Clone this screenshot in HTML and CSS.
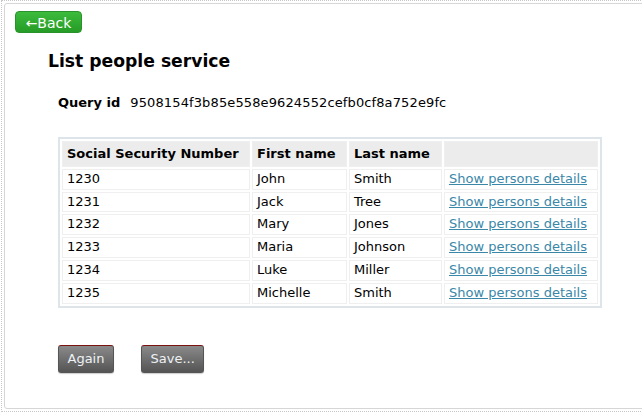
FILE: index.html
```html
<!DOCTYPE html>
<html>
<head>
<meta charset="utf-8">
<link rel="stylesheet" href="styles.css">
</head>
<body>
<div class="outer">
  <div class="panel">
    <a class="back-btn" href="#">←Back</a>
    <div class="content">
      <h2 class="title">List people service</h2>
      <div class="query"><span class="query-label">Query id</span><span class="query-value">9508154f3b85e558e9624552cefb0cf8a752e9fc</span></div>
      <table class="people">
        <thead>
          <tr><th class="c1">Social Security Number</th><th class="c2">First name</th><th class="c3">Last name</th><th class="c4"></th></tr>
        </thead>
        <tbody>
          <tr><td>1230</td><td>John</td><td>Smith</td><td><a href="#">Show persons details</a></td></tr>
          <tr><td>1231</td><td>Jack</td><td>Tree</td><td><a href="#">Show persons details</a></td></tr>
          <tr><td>1232</td><td>Mary</td><td>Jones</td><td><a href="#">Show persons details</a></td></tr>
          <tr><td>1233</td><td>Maria</td><td>Johnson</td><td><a href="#">Show persons details</a></td></tr>
          <tr><td>1234</td><td>Luke</td><td>Miller</td><td><a href="#">Show persons details</a></td></tr>
          <tr><td>1235</td><td>Michelle</td><td>Smith</td><td><a href="#">Show persons details</a></td></tr>
        </tbody>
      </table>
      <div class="actions">
        <button class="gray-btn">Again</button>
        <button class="gray-btn">Save...</button>
      </div>
    </div>
  </div>
</div>
</body>
</html>
```
FILE: styles.css
```css
html, body {
  margin: 0;
  padding: 0;
  background: #ffffff;
  overflow: hidden;
}
body {
  font-family: "DejaVu Sans", sans-serif;
  font-size: 13px;
  color: #000;
}
.outer {
  margin-left: 1px;
  width: 700px;
  height: 412px;
  border-top: 1px dotted #c8c8c8;
  border-left: 1px dotted #c8c8c8;
  border-bottom: 1px dotted #c8c8c8;
  padding: 2px 0 2px 2px;
  box-sizing: border-box;
}
.panel {
  height: 100%;
  border: 1px solid #d6d6d6;
  border-radius: 3px;
  box-sizing: border-box;
  padding-top: 7px;
}
.back-btn {
  display: inline-block;
  margin-left: 10px;
  width: 67px;
  height: 22px;
  line-height: 22px;
  box-sizing: border-box;
  text-align: center;
  color: #fff;
  font-size: 14px;
  text-decoration: none;
  border-radius: 4px;
  background: linear-gradient(#3cbb3c, #269c26);
  border: 1px solid #2a922a;
}
.content {
  padding-left: 43px;
}
.title {
  margin: 17px 0 0 0;
  font-size: 17.2px;
  font-weight: bold;
  line-height: 22px;
}
.query {
  margin: 22px 0 0 10px;
  display: flex;
  gap: 10px;
  line-height: 18px;
}
.query-label {
  font-weight: bold;
}
.query-value {
  letter-spacing: 0.12px;
}
.people {
  margin: 25px 0 0 10px;
  border-collapse: separate;
  border-spacing: 2px;
  border: 2px solid #dde4ea;
  width: 544px;
}
.people th, .people td {
  border: 1px solid #efefef;
  text-align: left;
  padding: 1px 4px;
  line-height: 16.8px;
  white-space: nowrap;
}
.people th {
  background: #ececec;
  padding: 4px 4px 3px 4px;
}
.people th.c1 { width: 178px; }
.people th.c2 { width: 85px; }
.people th.c3 { width: 83px; }
.people a {
  color: #3a87a8;
  text-decoration: underline;
}
.actions {
  margin: 37px 0 0 10px;
  display: flex;
  gap: 27px;
}
.gray-btn {
  font-family: "DejaVu Sans", sans-serif;
  font-size: 13px;
  color: #eef2f5;
  height: 28px;
  padding: 0 8.5px;
  border: 1px solid #555;
  border-top: 1px solid #7a1010;
  border-radius: 3px;
  background: linear-gradient(#8a8a8a, #545454);
  box-shadow: 0 1px 1px rgba(0,0,0,0.2);
}
```
